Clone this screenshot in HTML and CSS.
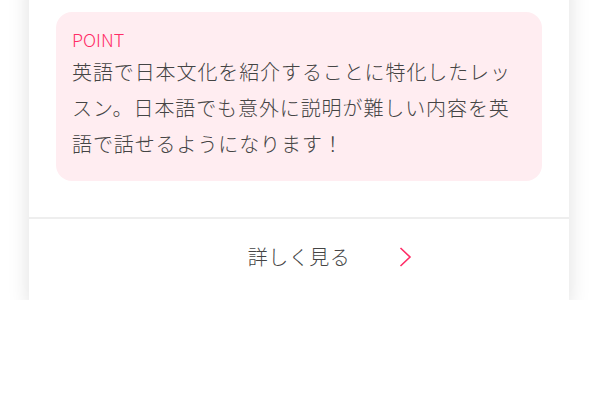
FILE: index.html
```html
<!DOCTYPE html>
<html lang="ja">
<head>
<meta charset="utf-8">
<link rel="stylesheet" href="styles.css">
</head>
<body>
<div class="page">
  <div class="card">
    <div class="card-body">
      <div class="point">
        <p class="point-label">POINT</p>
        <p class="point-text">英語で日本文化を紹介することに特化したレッスン。日本語でも意外に説明が難しい内容を英語で話せるようになります！</p>
      </div>
    </div>
    <div class="card-footer">
      <a class="more" href="#">詳しく見る
        <svg class="chev" width="13" height="20" viewBox="0 0 13 20"><path d="M1.5 1 L11 10 L1.5 19" fill="none" stroke="#ff2c66" stroke-width="1.6"/></svg>
      </a>
    </div>
  </div>
</div>
</body>
</html>
```
FILE: styles.css
```css
html, body {
  margin: 0;
  padding: 0;
  background: #fff;
}
body {
  font-family: "Noto Sans CJK JP", "Noto Sans", sans-serif;
  color: #555;
}
.page {
  padding: 0 29px;
}
.card {
  margin-top: -30px;
  background: #fff;
  box-shadow: 0 8px 20px rgba(0, 0, 0, 0.13);
}
.card-body {
  padding: 42px 27px 36px;
}
.point {
  background: #ffedf1;
  border-radius: 16px;
  padding: 16px 16px 19px;
}
.point-label {
  margin: 0;
  font-size: 18px;
  font-weight: 300;
  line-height: 22px;
  color: #ff2c66;
}
.point-text {
  margin: 4px 0 0;
  font-size: 20px;
  line-height: 36px;
  letter-spacing: 0.9px;
  font-weight: 300;
  color: #444;
}
.card-footer {
  border-top: 2px solid #eeeeee;
  height: 81px;
  display: flex;
  align-items: center;
  justify-content: center;
}
.more {
  position: relative;
  top: -3px;
  font-size: 20px;
  font-weight: 300;
  color: #444;
  text-decoration: none;
  letter-spacing: 0.5px;
}
.chev {
  position: absolute;
  left: 151px;
  top: 5px;
}
```
